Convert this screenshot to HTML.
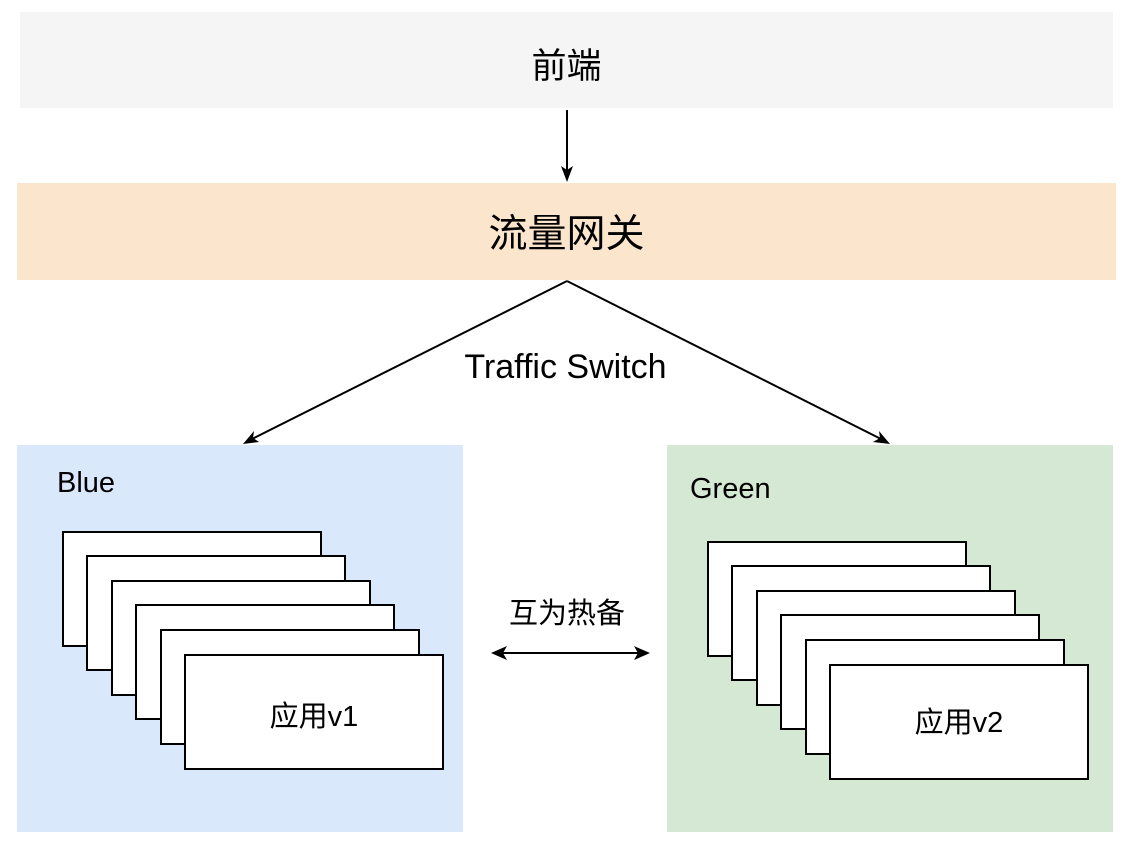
<!DOCTYPE html>
<html><head><meta charset="utf-8"><style>
body{margin:0;width:1130px;height:844px;background:#fff;position:relative;overflow:hidden;font-family:"Liberation Sans","Noto Sans CJK SC",sans-serif;color:#000}
.a{position:absolute}
.card{position:absolute;width:256px;height:112px;background:#fff;border:2px solid #000}
.t{position:absolute;white-space:nowrap;line-height:1}
</style></head><body>
<div class="a" style="left:20px;top:12px;width:1093px;height:96px;background:#f5f5f5"></div>
<div class="t" style="left:0;width:1133px;text-align:center;top:49px;font-size:35px">前端</div>
<div class="a" style="left:17px;top:183px;width:1099px;height:97px;background:#fce5cd"></div>
<div class="t" style="left:0;width:1133px;text-align:center;top:215px;font-size:39px">流量网关</div>
<div class="a" style="left:17px;top:445px;width:446px;height:387px;background:#dae8fc"></div>
<div class="a" style="left:667px;top:445px;width:446px;height:387px;background:#d5e8d4"></div>
<div class="t" style="left:57px;top:469px;font-size:29px">Blue</div>
<div class="t" style="left:690px;top:475px;font-size:29px">Green</div>
<div class="card" style="left:62px;top:531px"></div>
<div class="card" style="left:86px;top:555px"></div>
<div class="card" style="left:111px;top:580px"></div>
<div class="card" style="left:135px;top:604px"></div>
<div class="card" style="left:160px;top:629px"></div>
<div class="card" style="left:184px;top:654px"></div>
<div class="t" style="left:186px;width:256px;text-align:center;top:703px;font-size:29px">应用v1</div>
<div class="card" style="left:707px;top:541px"></div>
<div class="card" style="left:731px;top:565px"></div>
<div class="card" style="left:756px;top:590px"></div>
<div class="card" style="left:780px;top:614px"></div>
<div class="card" style="left:805px;top:639px"></div>
<div class="card" style="left:829px;top:664px"></div>
<div class="t" style="left:831px;width:256px;text-align:center;top:709px;font-size:29px">应用v2</div>
<div class="t" style="left:0;width:1131px;text-align:center;top:350px;font-size:34px">Traffic Switch</div>
<div class="t" style="left:467px;width:200px;text-align:center;top:600px;font-size:29px">互为热备</div>
<svg class="a" style="left:0;top:0" width="1130" height="844">
<g stroke="#000" stroke-width="2" fill="none">
<line x1="567" y1="110" x2="567" y2="172"/>
<line x1="567" y1="281" x2="252" y2="439"/>
<line x1="567" y1="281" x2="881" y2="439"/>
<line x1="502" y1="653" x2="639" y2="653"/>
</g>
<g fill="#000">
<path d="M567 182 L561 166 L567 170 L573 166 Z"/>
<path d="M243 444 L254 431 L253 438 L259 442 Z"/>
<path d="M890 444 L873 442 L880 438 L879 431 Z"/>
<path d="M491 653 L507 646 L503 653 L507 660 Z"/>
<path d="M650 653 L634 646 L638 653 L634 660 Z"/>
</g>
</svg>
</body></html>
